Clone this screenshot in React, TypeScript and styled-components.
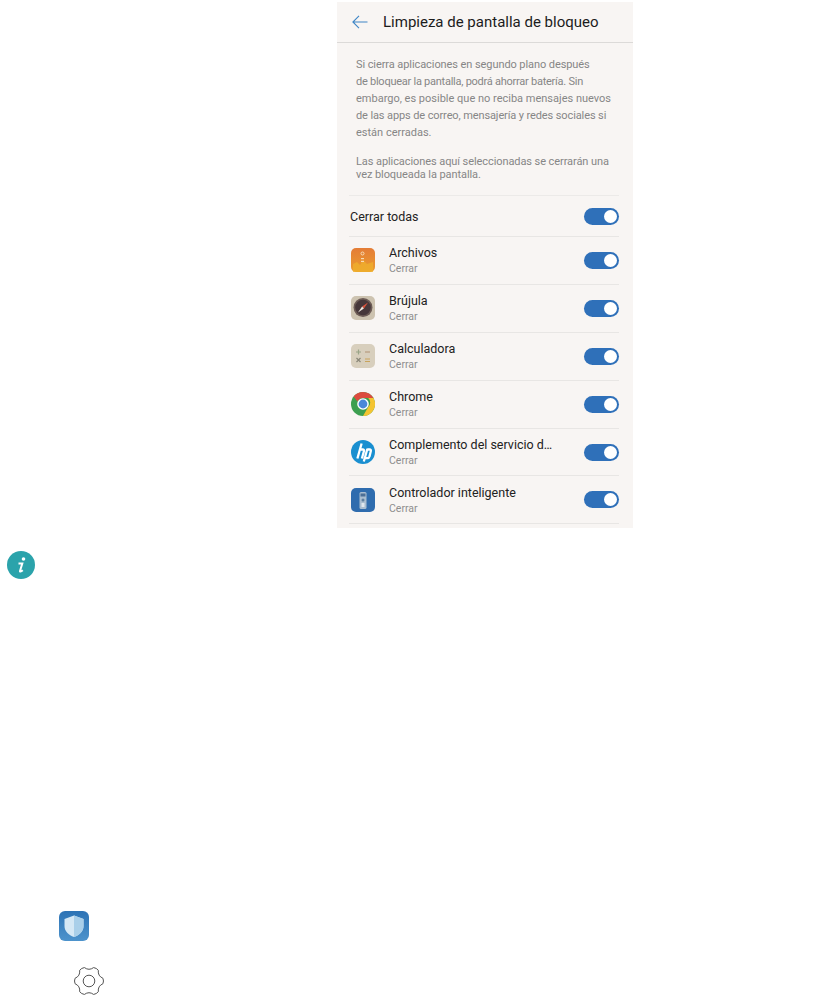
import styled, { createGlobalStyle } from "styled-components";

const GlobalStyle = createGlobalStyle`
  html, body {
    margin: 0;
    background: #fff;
    font-family: Roboto, "Liberation Sans", sans-serif;
  }
`;

const Page = styled.div`
  width: 832px;
  height: 995px;
  overflow: hidden;
  display: flex;
  flex-direction: column;
  padding-top: 2px;
  box-sizing: border-box;
`;

const Phone = styled.section`
  width: 296px;
  height: 526px;
  margin-left: 337px;
  background: #f8f5f3;
  overflow: hidden;
  flex-shrink: 0;
`;

const Header = styled.header`
  height: 40px;
  display: flex;
  align-items: center;
  padding-left: 15px;
  gap: 15px;
  border-bottom: 1px solid #dcdad8;
`;

const HeaderTitle = styled.h1`
  margin: 0;
  font-size: 15px;
  font-weight: 400;
  color: #1c1c1c;
  white-space: nowrap;
`;

const Intro = styled.div`
  padding: 13px 14px 14px 19px;
  height: 152px;
  box-sizing: border-box;
  color: #868686;
  font-size: 11px;
`;

const Para = styled.p<{ $tight?: boolean }>`
  margin: 0 0 ${(p) => (p.$tight ? 0 : "14px")};
  line-height: ${(p) => (p.$tight ? "13px" : "17px")};
  white-space: nowrap;
`;

const Line = styled.span<{ $track?: number }>`
  display: block;
  letter-spacing: ${(p) => p.$track ?? 0}px;
`;

const List = styled.div`
  margin: 0 14px 0 12px;
`;

const AllRow = styled.div`
  height: 41px;
  display: flex;
  align-items: center;
  justify-content: space-between;
  border-top: 1px solid #eceae8;
  box-sizing: border-box;
  padding-left: 1px;
  font-size: 12.5px;
  color: #222;
`;

const AppRow = styled.div`
  height: 47.9px;
  display: flex;
  align-items: center;
  border-top: 1px solid #e8e6e4;
  box-sizing: border-box;
  padding-left: 2px;
`;

const AppIcon = styled.div`
  width: 24px;
  height: 24px;
  flex-shrink: 0;
  margin-right: 14px;
  svg {
    display: block;
  }
`;

const AppText = styled.div`
  flex: 1;
  min-width: 0;
  display: flex;
  flex-direction: column;
  gap: 2px;
`;

const AppName = styled.div`
  font-size: 12.5px;
  line-height: 15px;
  color: #222;
  white-space: nowrap;
`;

const AppSub = styled.div`
  font-size: 10.5px;
  line-height: 13px;
  color: #8e8e8e;
`;

const Toggle = styled.div`
  width: 35px;
  height: 17px;
  border-radius: 9px;
  background: #2f70b9;
  display: flex;
  justify-content: flex-end;
  align-items: center;
  padding-right: 2px;
  box-sizing: border-box;
  flex-shrink: 0;
`;

const Knob = styled.div`
  width: 13px;
  height: 13px;
  border-radius: 50%;
  background: #fff;
`;

const NoteIcon = styled.div`
  margin: 23px 0 0 7px;
  width: 28px;
  height: 28px;
`;

const ShieldIcon = styled.div`
  margin: 332px 0 0 59px;
  width: 30px;
  height: 30px;
`;

const GearIcon = styled.div`
  margin: 25px 0 0 74px;
  width: 30px;
  height: 30px;
`;

const polar = (r: number, deg: number) => {
  const a = (deg * Math.PI) / 180;
  return `${(15 + r * Math.cos(a)).toFixed(2)} ${(15 + r * Math.sin(a)).toFixed(2)}`;
};

// six rounded lobes, dipping between them
const gearPath = () => {
  let d = `M${polar(14.2, -11)}`;
  for (let i = 0; i < 6; i++) {
    const t = i * 60;
    d += ` Q${polar(15, t)} ${polar(14.2, t + 11)}`;
    d += ` Q${polar(10, t + 30)} ${polar(14.2, t + 49)}`;
  }
  return d + "Z";
};

const Back = () => (
  <svg width="16" height="14" viewBox="0 0 16 14" fill="none" stroke="#3f86c6" strokeWidth="1.1">
    <path d="M15.5 7H1M7 .8 .9 7 7 13.2" />
  </svg>
);

const Archivos = () => (
  <svg width="24" height="24" viewBox="0 0 24 24">
    <defs>
      <linearGradient id="arch" x1="0" y1="0" x2="0" y2="1">
        <stop offset="0" stopColor="#e47c36" />
        <stop offset="1" stopColor="#eb9d2e" />
      </linearGradient>
    </defs>
    <rect width="24" height="24" rx="5" fill="url(#arch)" />
    <path d="M2 24v-8l4-2 3 3 3-5 4 4 6-2v10z" fill="#efb02c" opacity=".75" />
    <circle cx="11.500" cy="5.500" r="1.500" fill="none" stroke="#f6dcb8" />
    <rect x="10" y="10" width="3" height="1.200" fill="#f6dcb8" />
    <rect x="10" y="12.800" width="3" height="1.200" fill="#f6dcb8" />
  </svg>
);

const Brujula = () => (
  <svg width="24" height="24" viewBox="0 0 24 24">
    <rect width="24" height="24" rx="5" fill="#cdc3b0" />
    <circle cx="12" cy="11.500" r="9.500" fill="#6c5b55" />
    <circle cx="12" cy="11.500" r="7.800" fill="#46373a" />
    <path d="M17 6.500 12.900 12.400 11.100 10.600z" fill="#d8533c" />
    <path d="M7 16.500 11.100 10.600 12.900 12.400z" fill="#efe8e0" />
  </svg>
);

const Calculadora = () => (
  <svg width="24" height="24" viewBox="0 0 24 24" fill="none">
    <rect width="24" height="24" rx="5" fill="#d8cfbd" />
    <path d="M5 8h5M7.500 5.500v5" stroke="#9aa588" strokeWidth="1.2" />
    <path d="M14 8h5" stroke="#b89a80" strokeWidth="1.2" />
    <path d="M5.500 14l4 4M9.500 14l-4 4" stroke="#8a8778" strokeWidth="1.2" />
    <path d="M14 15h5M14 17.500h5" stroke="#c9a45c" strokeWidth="1.2" />
  </svg>
);

const Chrome = () => (
  <svg width="24" height="24" viewBox="0 0 24 24">
    <circle cx="12" cy="12" r="12" fill="#3d9f50" />
    <path d="M12 0a12 12 0 0 1 10.400 6H12a6 6 0 0 0-5.500 3.500L2.600 4.500A12 12 0 0 1 12 0z" fill="#dc4b3e" />
    <path d="M22.400 6A12 12 0 0 1 12 24l5.200-9a6 6 0 0 0 0-9z" fill="#f4c430" />
    <circle cx="12" cy="12" r="5.800" fill="#fff" />
    <circle cx="12" cy="12" r="4.400" fill="#4a88d8" />
  </svg>
);

const Hp = () => (
  <svg width="24" height="24" viewBox="0 0 24 24">
    <circle cx="12" cy="12" r="12" fill="#1a8fd0" />
    <path
      d="M10.600 3.500 6.400 18.500M8.800 9.500h2.900c1.100 0 1.500.7 1.200 1.800l-2 7.200M16.400 8.800 12.800 21.500M16.400 9.500h2.200c1.100 0 1.500.7 1.200 1.800l-1.300 5c-.3.900-.9 1.900-2.100 1.900h-2.200"
      fill="none"
      stroke="#fff"
      strokeWidth="2.300"
    />
  </svg>
);

const Controlador = () => (
  <svg width="24" height="24" viewBox="0 0 24 24">
    <rect width="24" height="24" rx="5" fill="#2f6cae" />
    <rect x="8.500" y="4" width="7" height="17" rx="1.500" fill="#a9bdd0" />
    <rect x="9.500" y="5.500" width="5" height="3" fill="#4c6f96" />
    <circle cx="12" cy="12" r="1.500" fill="#5f7f9f" />
    <rect x="10.500" y="15" width="3" height="4" fill="#dfe7ee" />
  </svg>
);

const apps = [
  { name: "Archivos", icon: <Archivos /> },
  { name: "Brújula", icon: <Brujula /> },
  { name: "Calculadora", icon: <Calculadora /> },
  { name: "Chrome", icon: <Chrome /> },
  { name: "Complemento del servicio d…", icon: <Hp /> },
  { name: "Controlador inteligente", icon: <Controlador /> },
];

const Switch = () => (
  <Toggle>
    <Knob />
  </Toggle>
);

export default function App() {
  return (
    <>
      <GlobalStyle />
      <Page>
        <Phone>
          <Header>
            <Back />
            <HeaderTitle>Limpieza de pantalla de bloqueo</HeaderTitle>
          </Header>
          <Intro>
            <Para>
              <Line $track={-0.08}>Si cierra aplicaciones en segundo plano después</Line>
              <Line $track={-0.25}>de bloquear la pantalla, podrá ahorrar batería. Sin</Line>
              <Line>embargo, es posible que no reciba mensajes nuevos</Line>
              <Line $track={-0.11}>de las apps de correo, mensajería y redes sociales si</Line>
              <Line>están cerradas.</Line>
            </Para>
            <Para $tight>
              <Line $track={-0.08}>Las aplicaciones aquí seleccionadas se cerrarán una</Line>
              <Line $track={-0.08}>vez bloqueada la pantalla.</Line>
            </Para>
          </Intro>
          <List>
            <AllRow>
              Cerrar todas
              <Switch />
            </AllRow>
            {apps.map((app) => (
              <AppRow key={app.name}>
                <AppIcon>{app.icon}</AppIcon>
                <AppText>
                  <AppName>{app.name}</AppName>
                  <AppSub>Cerrar</AppSub>
                </AppText>
                <Switch />
              </AppRow>
            ))}
            <AppRow />
          </List>
        </Phone>
        <NoteIcon>
          <svg width="28" height="28" viewBox="0 0 28 28">
            <circle cx="14" cy="14" r="14" fill="#2ba3ab" />
            <circle cx="16.500" cy="8" r="1.800" fill="#fff" />
            <path d="M11.500 12.500h3.800l-2.300 7.500c-.2.800.8 1 2.800-.7" fill="none" stroke="#fff" strokeWidth="2" />
          </svg>
        </NoteIcon>
        <ShieldIcon>
          <svg width="30" height="30" viewBox="0 0 30 30">
            <defs>
              <linearGradient id="shieldBg" x1="0" y1="0" x2="0" y2="1">
                <stop offset="0" stopColor="#2d73b5" />
                <stop offset="1" stopColor="#4d93cc" />
              </linearGradient>
            </defs>
            <rect width="30" height="30" rx="6" fill="url(#shieldBg)" />
            <path d="M15 4.500 24.500 8v7c0 5.500-4 9-9.500 11-5.500-2-9.500-5.500-9.500-11V8z" fill="#d5e8f5" />
            <path d="M15 4.500 24.500 8v7c0 5.500-4 9-9.500 11z" fill="#a9cfe9" />
          </svg>
        </ShieldIcon>
        <GearIcon>
          <svg width="30" height="30" viewBox="0 0 30 30" fill="none" stroke="#555" strokeWidth="1">
            <path d={gearPath()} />
            <circle cx="15" cy="15" r="5.800" />
          </svg>
        </GearIcon>
      </Page>
    </>
  );
}
